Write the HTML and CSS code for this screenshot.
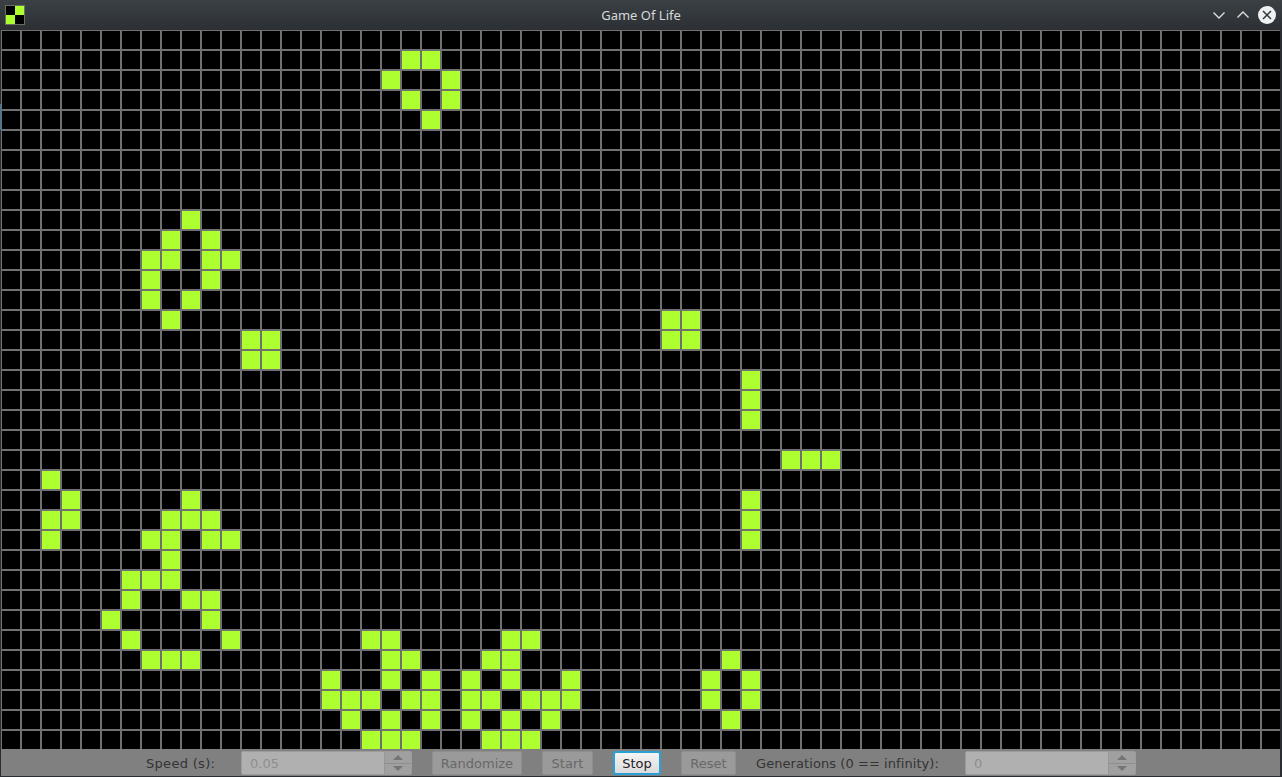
FILE: index.html
```html
<!doctype html>
<html>

<head>
	<meta charset=utf-8>
	<title>Game Of Life</title>
	<link rel="stylesheet" href="styles.css">
</head>

<body>
	<div class="desktop-peek"></div>
	<header class="titlebar">
		<div class="app-icon"><i></i><i class="on"></i><i class="on"></i><i></i></div>
		<div class="title">Game Of Life</div>
		<div class="window-buttons">
			<svg class="chevron" width="14" height="14" viewBox="0 0 14 14"><path d="M1.5 4.5 7 10l5.5-5.5"/></svg>
			<svg class="chevron" width="14" height="14" viewBox="0 0 14 14"><path d="M1.5 9.5 7 4l5.5 5.5"/></svg>
			<svg class="close" width="20" height="20" viewBox="0 0 20 20"><circle cx="10" cy="10" r="9"/><path d="M6 6l8 8M14 6l-8 8"/></svg>
		</div>
	</header>

	<main id="board" class="board"></main>

	<footer class="controls">
		<label class="field-label speed-label">Speed (s):</label>
		<div class="spinner">
			<input type="text" value="0.05" disabled>
			<div class="arrows">
				<span class="arrow"><b class="up"></b></span>
				<span class="arrow"><b class="down"></b></span>
			</div>
		</div>
		<button class="btn-randomize" disabled>Randomize</button>
		<button class="btn-start" disabled>Start</button>
		<button class="btn-stop focused">Stop</button>
		<button class="btn-reset" disabled>Reset</button>
		<label class="field-label generations-label">Generations (0 == infinity):</label>
		<div class="spinner">
			<input type="text" value="0" disabled>
			<div class="arrows">
				<span class="arrow"><b class="up"></b></span>
				<span class="arrow"><b class="down"></b></span>
			</div>
		</div>
	</footer>

	<script src="app.js"></script>
</body>
</html>
```

FILE: styles.css
```css
html, body{
	width: 100%;
	height: 100%;
	margin: 0; padding: 0;
	overflow: hidden;
	background-color: #2a2e32;
}

*, *:after, *:before{
	box-sizing: border-box;
}

.desktop-peek{
	position: absolute;
	left: 0;
	top: 104px;
	width: 1px;
	height: 26px;
	background-color: #2f7fa6;
}

.titlebar{
	height: 30px;
	display: grid;
	grid-template-columns: 1fr auto 1fr;
	align-items: center;
	background: linear-gradient(#3b4045, #2c3034);
	color: #d6d8da;
	font: 13px "Noto Sans", sans-serif;
}

.app-icon{
	margin-left: 5px;
	width: 20px;
	height: 20px;
	display: grid;
	grid-template-columns: 1fr 1fr;
	border: 1px solid #6a6e60;
	background-color: #6a6e60;
}

.app-icon i{
	background-color: #000;
}

.app-icon .on{
	background-color: #adff2f;
}

.window-buttons{
	justify-self: end;
	margin-right: 5px;
	display: flex;
	align-items: center;
	gap: 10px;
}

.chevron{
	fill: none;
	stroke: #dfe1e3;
	stroke-width: 1.3;
}

.close{
	margin-left: -3px;
}

.close circle{
	fill: #eff0f1;
}

.close path{
	fill: none;
	stroke: #31363b;
	stroke-width: 1.5;
}

.board{
	margin-left: 1px;
	width: 1279px;
	height: 719px;
	padding: 1px 0 0 1px;
	display: grid;
	grid-template-columns: repeat(64, 18px);
	grid-template-rows: repeat(36, 18px);
	gap: 2px;
	background-color: #707070;
}

.cell{
	background-color: #000;
}

.cell.alive{
	background-color: #adff2f;
}

.controls{
	margin-left: 1px;
	width: 1279px;
	height: 27px;
	padding: 1px 0 0 1px;
	display: flex;
	justify-content: center;
	align-items: center;
	gap: 20px;
	background-color: #808080;
	font: 13px "DejaVu Sans", sans-serif;
	color: #333;
}

.field-label{
	white-space: nowrap;
}

.speed-label{
	width: 75px;
	letter-spacing: .3px;
}

.generations-label{
	width: 189px;
	letter-spacing: .07px;
}

.spinner{
	width: 171px;
	height: 24px;
	display: flex;
	border: 1px solid #9c9c9c;
	border-radius: 2px;
	background-color: #b0b0b0;
}

.spinner input{
	flex: 1;
	min-width: 0;
	border: 0;
	padding: 0 0 0 8px;
	background-color: transparent;
	color: #8e8e8e;
	font: inherit;
}

.arrows{
	width: 27px;
	display: flex;
	flex-direction: column;
	background-color: #a0a0a0;
	border-left: 1px solid #979797;
}

.arrow{
	flex: 1;
	display: flex;
	justify-content: center;
	align-items: center;
}

.arrow + .arrow{
	border-top: 1px solid #8e8e8e;
}

.arrow b{
	width: 0;
	height: 0;
	border-left: 5px solid transparent;
	border-right: 5px solid transparent;
}

.arrow .up{
	border-bottom: 5px solid #757575;
}

.arrow .down{
	border-top: 5px solid #757575;
}

button{
	height: 24px;
	padding: 0;
	border: 1px solid #8f8f8f;
	border-radius: 2px;
	background-color: #9a9a9a;
	color: #686868;
	font: inherit;
}

.btn-randomize{
	width: 90px;
}

.btn-start{
	width: 51px;
}

.btn-stop{
	width: 48px;
}

.btn-reset{
	width: 55px;
}

button.focused{
	border: 2px solid #29a0d8;
	border-radius: 3px;
	background: linear-gradient(#f4f4f4, #dcdcdc);
	color: #222;
}
```

FILE: app.js
```js
// live cells, [row, col, col, ...]
var alive = [
	[1, 20, 21], [2, 19, 22], [3, 20, 22], [4, 21],
	[9, 9], [10, 8, 10], [11, 7, 8, 10, 11], [12, 7, 10], [13, 7, 9], [14, 8, 33, 34],
	[15, 12, 13, 33, 34], [16, 12, 13],
	[17, 37], [18, 37], [19, 37], [21, 39, 40, 41],
	[22, 2], [23, 3, 9, 37], [24, 2, 3, 8, 9, 10, 37], [25, 2, 7, 8, 10, 11, 37],
	[26, 8], [27, 6, 7, 8], [28, 6, 9, 10], [29, 5, 10],
	[30, 6, 11, 18, 19, 25, 26],
	[31, 7, 8, 9, 19, 20, 24, 25, 36],
	[32, 16, 19, 21, 23, 25, 28, 35, 37],
	[33, 16, 17, 18, 20, 21, 23, 24, 26, 27, 28, 35, 37],
	[34, 17, 19, 21, 23, 25, 27, 36],
	[35, 18, 19, 20, 24, 25, 26]
];

var board = document.getElementById("board");
var cells = [];

for (var i = 0; i < 36 * 64; i++) {
	var cell = document.createElement("div");
	cell.className = "cell";
	board.appendChild(cell);
	cells.push(cell);
}

alive.forEach(function (line) {
	for (var i = 1; i < line.length; i++) {
		cells[line[0] * 64 + line[i]].classList.add("alive");
	}
});
```
